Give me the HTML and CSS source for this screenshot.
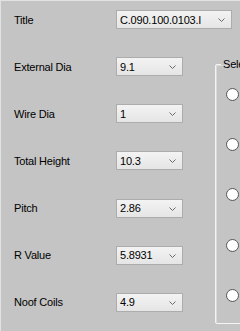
FILE: index.html
```html
<!DOCTYPE html>
<html lang="en">
<head>
  <meta charset="UTF-8" />
  <title>Spring Parameters</title>
  <link rel="stylesheet" href="styles.css">
</head>
<body>
  <div class="window">
    <div class="row">
      <span class="label">Title</span>
      <div class="combo wide">
        <span>C.090.100.0103.I</span>
        <svg class="chev" width="7" height="4" viewBox="0 0 7 4"><polyline points="0.5,0.5 3.5,3.5 6.5,0.5" fill="none" stroke="#6a6a6a" stroke-width="1"/></svg>
      </div>
    </div>

    <div class="main">
      <div class="fields">
        <div class="row">
          <span class="label">External Dia</span>
          <div class="combo"><span>9.1</span><svg class="chev" width="7" height="4" viewBox="0 0 7 4"><polyline points="0.5,0.5 3.5,3.5 6.5,0.5" fill="none" stroke="#6a6a6a" stroke-width="1"/></svg></div>
        </div>
        <div class="row">
          <span class="label">Wire Dia</span>
          <div class="combo"><span>1</span><svg class="chev" width="7" height="4" viewBox="0 0 7 4"><polyline points="0.5,0.5 3.5,3.5 6.5,0.5" fill="none" stroke="#6a6a6a" stroke-width="1"/></svg></div>
        </div>
        <div class="row">
          <span class="label">Total Height</span>
          <div class="combo"><span>10.3</span><svg class="chev" width="7" height="4" viewBox="0 0 7 4"><polyline points="0.5,0.5 3.5,3.5 6.5,0.5" fill="none" stroke="#6a6a6a" stroke-width="1"/></svg></div>
        </div>
        <div class="row">
          <span class="label">Pitch</span>
          <div class="combo"><span>2.86</span><svg class="chev" width="7" height="4" viewBox="0 0 7 4"><polyline points="0.5,0.5 3.5,3.5 6.5,0.5" fill="none" stroke="#6a6a6a" stroke-width="1"/></svg></div>
        </div>
        <div class="row">
          <span class="label">R Value</span>
          <div class="combo"><span>5.8931</span><svg class="chev" width="7" height="4" viewBox="0 0 7 4"><polyline points="0.5,0.5 3.5,3.5 6.5,0.5" fill="none" stroke="#6a6a6a" stroke-width="1"/></svg></div>
        </div>
        <div class="row">
          <span class="label">Noof Coils</span>
          <div class="combo"><span>4.9</span><svg class="chev" width="7" height="4" viewBox="0 0 7 4"><polyline points="0.5,0.5 3.5,3.5 6.5,0.5" fill="none" stroke="#6a6a6a" stroke-width="1"/></svg></div>
        </div>
      </div>

      <fieldset class="group">
        <legend>Select Type</legend>
        <div class="radios">
          <span class="radio"></span>
          <span class="radio"></span>
          <span class="radio"></span>
          <span class="radio"></span>
          <span class="radio"></span>
        </div>
      </fieldset>
    </div>
  </div>
</body>
</html>
```

FILE: styles.css
```css
html, body {
  margin: 0;
  padding: 0;
  width: 240px;
  height: 331px;
  overflow: hidden;
  background: #c4c4c4;
}

.window {
  box-sizing: border-box;
  width: 240px;
  height: 331px;
  padding: 9px 0 0 13px;
  border-top: 1px solid #e2e2e2;
  border-left: 1px solid #e2e2e2;
  font-family: "Liberation Sans", Arial, sans-serif;
  font-size: 11px;
  letter-spacing: -0.2px;
  color: #000;
  white-space: nowrap;
}

.row {
  display: flex;
  align-items: center;
  height: 19px;
}

.label {
  width: 102px;
  flex: none;
}

.combo {
  box-sizing: border-box;
  position: relative;
  display: flex;
  align-items: center;
  width: 67px;
  height: 19px;
  padding-left: 3px;
  border: 1px solid #acacac;
  background: linear-gradient(#f3f3f3, #e5e5e5);
}

.combo.wide {
  width: 116px;
}

.chev {
  position: absolute;
  right: 6px;
  top: 7px;
}

.main {
  display: flex;
  margin-top: 28px;
}

.fields {
  display: flex;
  flex-direction: column;
  gap: 28.2px;
  width: 201px;
  flex: none;
}

.group {
  box-sizing: border-box;
  margin: 1px 0 0 0;
  padding: 0;
  width: 60px;
  height: 266px;
  flex: none;
  border: 1px solid #f4f4f4;
  border-radius: 2px;
  box-shadow: inset 1px 1px 0 #dadada;
}

.group legend {
  margin-left: 5px;
  padding: 0 2px;
  font-size: 11px;
}

.radios {
  display: flex;
  flex-direction: column;
  gap: 37.2px;
  padding: 18px 0 0 10px;
}

.radio {
  box-sizing: border-box;
  width: 13px;
  height: 13px;
  border: 1px solid #5a5a5a;
  border-radius: 50%;
  background: radial-gradient(circle at 50% 40%, #ffffff 60%, #e8e8e8);
}
```
